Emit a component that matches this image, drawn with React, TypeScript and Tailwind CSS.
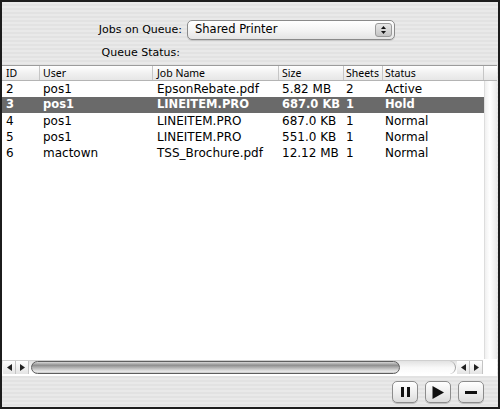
import React from "react";

const cols = [
  { key: "id", label: "ID", w: "w-[38px]", pl: "pl-[4px]" },
  { key: "user", label: "User", w: "w-[113px]", pl: "pl-[3px]" },
  { key: "job", label: "Job Name", w: "w-[126px]", pl: "pl-[4px]" },
  { key: "size", label: "Size", w: "w-[65px]", pl: "pl-[3px]" },
  { key: "sheets", label: "Sheets", w: "w-[39px]", pl: "pl-[2px]" },
  { key: "status", label: "Status", w: "flex-1", pl: "pl-[2px]" },
];

const rows = [
  ["2", "pos1", "EpsonRebate.pdf", "5.82 MB", "2", "Active"],
  ["3", "pos1", "LINEITEM.PRO", "687.0 KB", "1", "Hold"],
  ["4", "pos1", "LINEITEM.PRO", "687.0 KB", "1", "Normal"],
  ["5", "pos1", "LINEITEM.PRO", "551.0 KB", "1", "Normal"],
  ["6", "mactown", "TSS_Brochure.pdf", "12.12 MB", "1", "Normal"],
];

function ArrowBtn({ dir }: { dir: "l" | "r" }) {
  return (
    <div className="w-[13px] h-full flex items-center justify-center border-r border-[#c4c4c4] bg-[linear-gradient(#ffffff,#e4e4e4)]">
      <svg width="5" height="7" viewBox="0 0 5 7">
        {dir === "l" ? <path d="M5 0 L0 3.5 L5 7 Z" fill="#222" /> : <path d="M0 0 L5 3.5 L0 7 Z" fill="#222" />}
      </svg>
    </div>
  );
}

function ToolButton({ children }: { children: React.ReactNode }) {
  return (
    <div className="w-[26px] h-[22px] rounded-[5px] border border-[#8c8c8c] bg-[linear-gradient(#ffffff,#ececec_60%,#dcdcdc)] shadow-[0_1px_0_#bdbdbd] flex items-center justify-center">
      {children}
    </div>
  );
}

export default function App() {
  return (
    <div className="w-[500px] h-[409px] border-2 border-[#1c1c1c] flex flex-col font-['DejaVu_Sans',sans-serif] text-[11px] text-black bg-[repeating-linear-gradient(180deg,#e9e9e9_0px,#e9e9e9_2px,#e2e2e2_2px,#e2e2e2_4px)]">
      {/* top controls */}
      <div className="h-[63px] flex flex-col pt-[18px]">
        <div className="flex items-center h-[20px]">
          <div className="w-[180px] text-right text-[11px]">Jobs on Queue:</div>
          <div className="ml-[5px] w-[208px] h-[20px] rounded-[5px] border border-[#8a8a8a] bg-[linear-gradient(#ffffff,#f3f3f3_55%,#e4e4e4)] flex items-center shadow-[0_1px_0_#c8c8c8]">
            <div className="flex-1 pl-[7px] text-[11.5px]">Shared Printer</div>
            <div className="w-[17px] h-[14px] mr-[2px] rounded-[3px] bg-[linear-gradient(#e8e8e8,#c4c4c4)] border border-[#9a9a9a] flex flex-col items-center justify-center gap-[2px]">
              <svg width="5" height="3" viewBox="0 0 5 3"><path d="M0 3 L2.5 0 L5 3 Z" fill="#111" /></svg>
              <svg width="5" height="3" viewBox="0 0 5 3"><path d="M0 0 L2.5 3 L5 0 Z" fill="#111" /></svg>
            </div>
          </div>
        </div>
        <div className="flex items-center h-[14px] mt-[6px]">
          <div className="w-[178px] text-right text-[11px]">Queue Status:</div>
        </div>
      </div>

      {/* table */}
      <div className="h-[311px] bg-white border-t border-[#9c9c9c] flex flex-col mr-[1px]">
        {/* header */}
        <div className="h-[15px] flex bg-[linear-gradient(#ffffff,#f1f1f1_50%,#e6e6e6)] border-b border-[#b4b4b4] font-['Noto_Sans',sans-serif] text-[10.5px]">
          {cols.map((c) => (
            <div key={c.key} className={`${c.w} ${c.pl} h-full border-r border-[#c6c6c6] flex items-center leading-none`}>
              {c.label}
            </div>
          ))}
          <div className="w-[13px] h-full" />
        </div>
        {/* body */}
        <div className="flex-1 flex">
          <div className="flex-1 flex flex-col">
            {rows.map((r, i) => {
              const sel = i === 1;
              return (
                <div key={i} className={`h-[16px] flex items-center ${sel ? "bg-[#6a6a6a] text-white font-bold text-[11.5px]" : "text-[12px]"}`}>
                  {cols.map((c, j) => (
                    <div key={c.key} className={`${c.w} ${c.pl} whitespace-nowrap leading-none`}>
                      {r[j]}
                    </div>
                  ))}
                </div>
              );
            })}
          </div>
          <div className="w-[13px] bg-[linear-gradient(90deg,#f0f0f0,#ffffff_40%,#e8e8e8)] border-l border-[#dddddd]" />
        </div>
        {/* horizontal scrollbar */}
        <div className="h-[16px] flex mb-[1px]">
          <div className="flex-1 flex items-center h-[14px] mt-[1px] pl-[1px] bg-[linear-gradient(#e2e2e2,#f8f8f8_50%,#ffffff)] border-t border-[#cfcfcf]">
            <ArrowBtn dir="l" />
            <ArrowBtn dir="r" />
            <div className="flex-1 h-full flex items-center pl-[2px] pr-[1px] rounded-r-full border-r border-[#a0a0a0]">
              <div className="w-[369px] h-[13px] rounded-full border border-[#5e5e5e] bg-[linear-gradient(#d6d6d6,#8e8e8e_30%,#b8b8b8_55%,#e8e8e8_85%,#c8c8c8)]" />
            </div>
            <div className="w-[1px]" />
            <ArrowBtn dir="l" />
            <ArrowBtn dir="r" />
          </div>
          <div className="w-[14px] bg-white" />
        </div>
      </div>

      {/* bottom bar */}
      <div className="flex-1 flex items-start justify-end gap-[7px] pr-[14px] pt-[5px]">
        <ToolButton>
          <div className="flex gap-[3px]">
            <div className="w-[3px] h-[10px] bg-[#111]" />
            <div className="w-[3px] h-[10px] bg-[#111]" />
          </div>
        </ToolButton>
        <ToolButton>
          <svg width="12" height="13" viewBox="0 0 12 13"><path d="M0.5 0 L12 6.5 L0.5 13 Z" fill="#111" /></svg>
        </ToolButton>
        <ToolButton>
          <div className="w-[12px] h-[3px] bg-[#111]" />
        </ToolButton>
      </div>
    </div>
  );
}
